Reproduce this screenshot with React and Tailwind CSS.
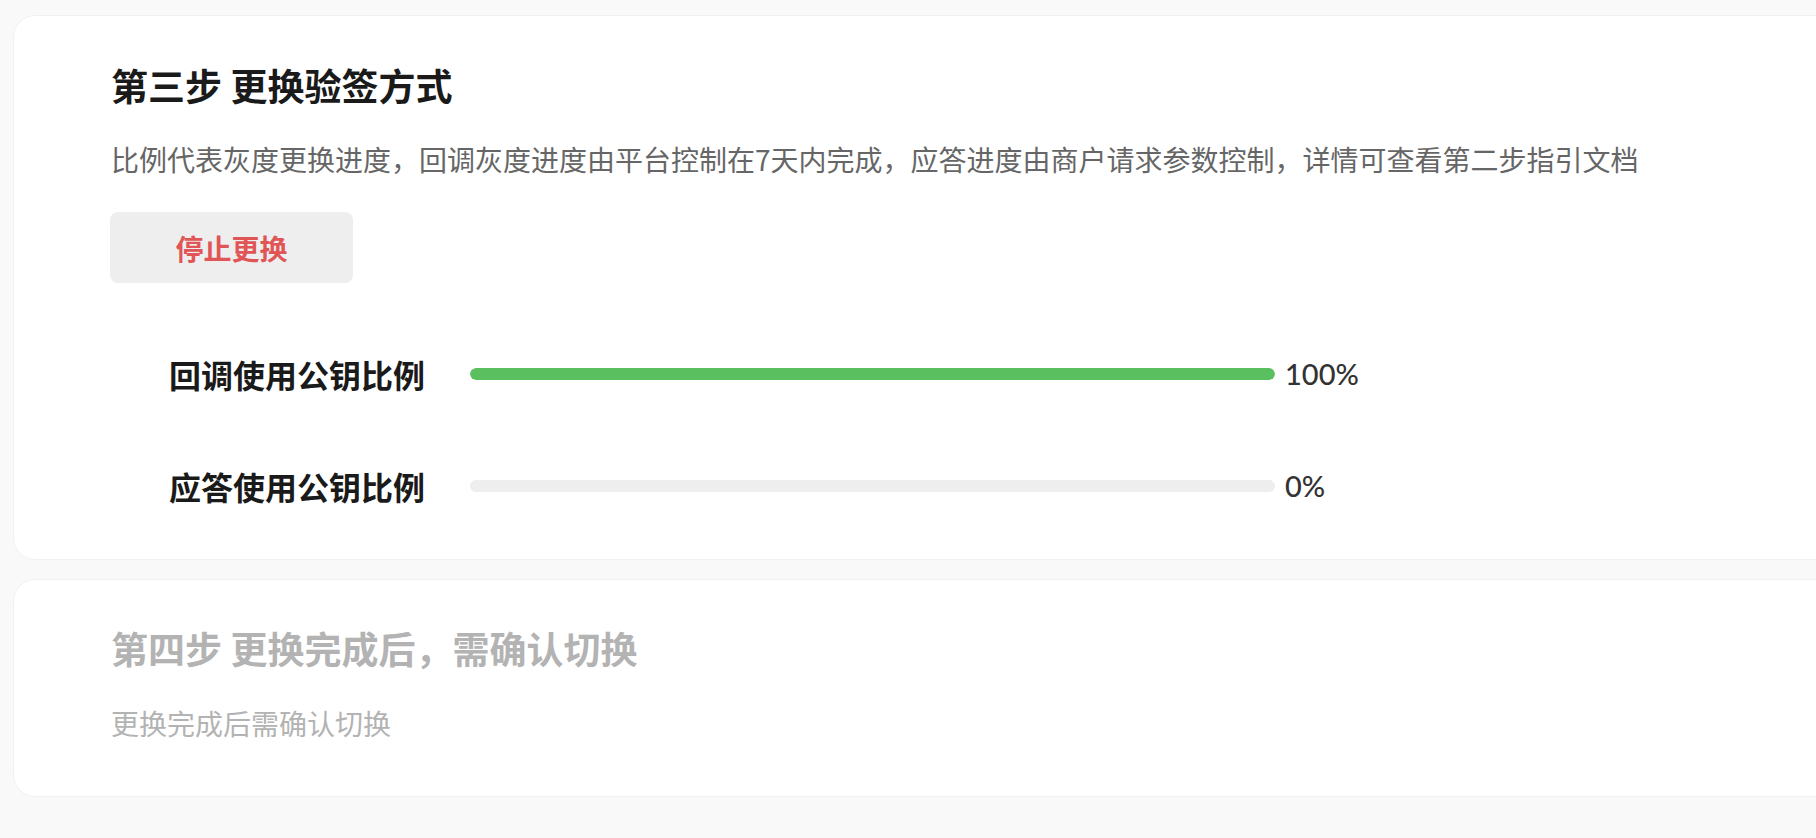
import React from 'react';

const cjk = { fontFamily: '"Noto Sans CJK SC", "Noto Sans", sans-serif' };
const latin = { fontFamily: 'Lato, "Noto Sans CJK SC", sans-serif' };

function RatioRow({ label, percent, className }) {
  return (
    <div className={`flex items-center h-[60px] pl-[58px] ${className}`}>
      <div className="w-[301px] shrink-0 text-[32px] leading-[60px] font-bold text-[#1a1a1a]" style={cjk}>
        {label}
      </div>
      <div className="w-[805px] h-[12px] rounded-full bg-[#eeeeee] overflow-hidden">
        {/* width comes from data */}
        <div className="h-full rounded-full bg-[#5ac05f]" style={{ width: `${percent}%` }} />
      </div>
      <div className="ml-[10px] text-[29px] font-medium text-[#333333]" style={latin}>
        {percent}%
      </div>
    </div>
  );
}

export default function App() {
  const rows = [
    { label: '回调使用公钥比例', percent: 100 },
    { label: '应答使用公钥比例', percent: 0 },
  ];

  return (
    <div className="min-h-screen w-full overflow-hidden bg-[#f9f9f9] pt-[15px] pl-[13px]" style={cjk}>
      {/* step 3 */}
      <div className="w-[1900px] bg-white border border-[#f1f1f1] rounded-[22px] pt-[44px] pb-[43px] px-[97px]">
        <h2 className="text-[37px] leading-[50px] font-bold text-[#1a1a1a]">第三步 更换验签方式</h2>
        <p className="mt-[29px] text-[28px] leading-[40px] text-[#666666]">
          比例代表灰度更换进度，回调灰度进度由平台控制在7天内完成，应答进度由商户请求参数控制，详情可查看第二步指引文档
        </p>
        <button className="mt-[33px] -ml-px w-[243px] h-[71px] rounded-[8px] bg-[#eeeeee] text-[28px] font-bold text-[#e05555]">
          停止更换
        </button>
        <div className="mt-[61px]">
          {rows.map((r, i) => (
            <RatioRow key={r.label} label={r.label} percent={r.percent} className={i > 0 ? 'mt-[52px]' : ''} />
          ))}
        </div>
      </div>

      {/* step 4 - not active yet */}
      <div className="mt-[19px] w-[1900px] bg-white border border-[#f1f1f1] rounded-[22px] pt-[43px] pb-[53px] px-[97px]">
        <h2 className="text-[37px] leading-[50px] font-bold text-[#b3b3b3]">第四步 更换完成后，需确认切换</h2>
        <p className="mt-[30px] text-[28px] leading-[40px] text-[#b3b3b3]">更换完成后需确认切换</p>
      </div>
    </div>
  );
}
